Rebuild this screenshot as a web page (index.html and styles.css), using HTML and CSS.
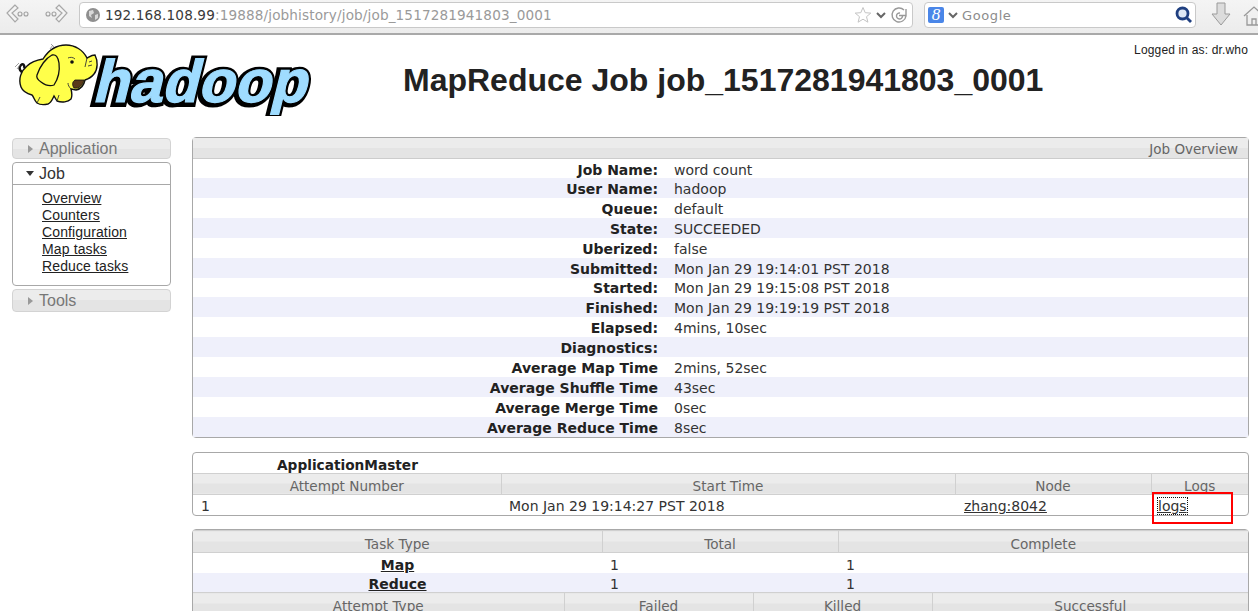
FILE: index.html
```html
<!DOCTYPE html>
<html lang="en">
<head>
<meta charset="utf-8">
<title>MapReduce Job job_1517281941803_0001</title>
<link rel="stylesheet" href="styles.css">
</head>
<body>
<div class="browser">
  <svg class="nav-ico" viewBox="0 0 26 24"><path class="chev" d="M11 3 L3 11 L11 20 L14 17 L8 11 L14 6 Z"/><circle class="dot" cx="16" cy="12" r="2"/><circle class="dot" cx="22" cy="12" r="2"/></svg>
  <svg class="nav-ico nav-fwd" viewBox="0 0 26 24"><path class="chev" d="M15 3 L23 11 L15 20 L12 17 L18 11 L12 6 Z"/><circle class="dot" cx="10" cy="12" r="2"/><circle class="dot" cx="4" cy="12" r="2"/></svg>
  <div class="urlbar">
    <svg class="globe" viewBox="0 0 14 14"><circle cx="7" cy="7" r="7" fill="#8f8f8f"/><path d="M3 3 L7 2 L8 5 L5 7 L6 10 L3 8 Z M9 7 L12 6 L12 10 L9 12 Z" fill="#d8d8d8"/></svg>
    <span class="url"><span class="host">192.168.108.99</span>:19888/jobhistory/job/job_1517281941803_0001</span>
    <svg class="star" viewBox="0 0 18 18"><path d="M9 1.5 L11.2 6.7 L16.8 7.1 L12.5 10.7 L13.9 16.2 L9 13.2 L4.1 16.2 L5.5 10.7 L1.2 7.1 L6.8 6.7 Z"/></svg>
    <svg class="caret" viewBox="0 0 10 7"><path d="M1 1 L5 5 L9 1"/></svg>
    <svg class="reload" viewBox="0 0 18 18"><path d="M14 4 A7 7 0 1 0 16 10 M10 7 A3 3 0 1 0 12.5 10 M9 9.5 H16 V3"/></svg>
  </div>
  <div class="searchbar">
    <span class="gicon">8</span>
    <svg class="caret" viewBox="0 0 10 7"><path d="M1 1 L5 5 L9 1"/></svg>
    <span class="engine">Google</span>
    <svg class="mag" viewBox="0 0 18 18"><circle cx="7.5" cy="7.5" r="5.5"/><path d="M11.5 11.5 L16 16"/></svg>
  </div>
  <svg class="download" viewBox="0 0 20 26"><path d="M6 1 H14 V12 H19 L10 23 L1 12 H6 Z"/></svg>
  <svg class="home" viewBox="0 0 20 22"><path d="M1 11 L11 2 L21 11 M4 10 V20 H18 V10 M9 20 V14 H13 V20"/></svg>
</div>

<header class="banner">
  <svg class="logo" viewBox="13 40 300 75" role="img" aria-label="Hadoop logo">
    <g transform="skewX(-14)">
      <text class="logo-back" x="116" y="102" textLength="214" lengthAdjust="spacingAndGlyphs">hadoop</text>
      <text class="logo-word" x="117" y="101" textLength="214" lengthAdjust="spacingAndGlyphs">hadoop</text>
    </g>
    <path class="ele-tail" d="M26 72 C20 72 18 67 21 64 C23 62 25 64 24 67"/>
    <path class="ele-hair" d="M15 66 L19 62 M17 68 L20 64 M50 48 L53 44 M54 46 L51 43"/>
    <path class="ele" d="M21 86 C18 78 21 70 27 65 C31 61 37 59 43 58 C48 50 56 44 66 44 C75 44 83 49 87 57 C89 56 92 54 95 54 C98 60 98 68 94 73 C91 77 88 78 85 79 C84 84 81 88 76 89 L71 88 C72 92 72 96 71 98 C68 101 62 102 57 100 L54 95 C52 99 51 102 48 103 C44 104 40 104 37 102 C34 99 34 96 32 94 C28 93 23 91 21 86 Z"/>
    <path class="ele-ear" d="M37 74 C40 65 46 57 52 54 C56 53 58 56 59 62 C60 70 58 78 54 84 C49 86 45 84 41 81 C38 79 36 77 37 74 Z"/>
    <path class="ele-mouth" d="M74 87 C72 84 72 81 75 79 L84 79 C83 84 79 88 74 87 Z"/>
    <circle class="ele-eye" cx="72" cy="61" r="1.8"/>
    <path class="ele-line" d="M68 57 C70 56 73 56 75 58 M87 57 L85 66 M89 61 L92 60 M88 65 L92 64 M71 88 C69 86 68 84 68 82 M37 102 L40 96 M57 100 L59 94"/>
  </svg>
  <h1 class="title">MapReduce Job job_1517281941803_0001</h1>
  <div class="logged">Logged in as: dr.who</div>
</header>

<div class="page">
  <nav class="sidebar">
    <div class="acc-head"><span class="tri tri-right"></span>Application</div>
    <div class="acc-open">
      <div class="acc-title"><span class="tri tri-down"></span>Job</div>
      <ul class="acc-links">
        <li><a href="#">Overview</a></li>
        <li><a href="#">Counters</a></li>
        <li><a href="#">Configuration</a></li>
        <li><a href="#">Map tasks</a></li>
        <li><a href="#">Reduce tasks</a></li>
      </ul>
    </div>
    <div class="acc-head"><span class="tri tri-right"></span>Tools</div>
  </nav>

  <main class="content">
    <div class="box">
      <table class="grid overview">
        <colgroup><col class="ov-label"><col></colgroup>
        <thead><tr><th colspan="2" class="ov-head">Job Overview</th></tr></thead>
        <tbody>
          <tr class="ov-first"><th>Job Name:</th><td>word count</td></tr>
          <tr class="alt"><th>User Name:</th><td>hadoop</td></tr>
          <tr><th>Queue:</th><td>default</td></tr>
          <tr class="alt"><th>State:</th><td>SUCCEEDED</td></tr>
          <tr><th>Uberized:</th><td>false</td></tr>
          <tr class="alt"><th>Submitted:</th><td>Mon Jan 29 19:14:01 PST 2018</td></tr>
          <tr><th>Started:</th><td>Mon Jan 29 19:15:08 PST 2018</td></tr>
          <tr class="alt"><th>Finished:</th><td>Mon Jan 29 19:19:19 PST 2018</td></tr>
          <tr><th>Elapsed:</th><td>4mins, 10sec</td></tr>
          <tr class="alt"><th>Diagnostics:</th><td></td></tr>
          <tr><th>Average Map Time</th><td>2mins, 52sec</td></tr>
          <tr class="alt"><th>Average Shuffle Time</th><td>43sec</td></tr>
          <tr><th>Average Merge Time</th><td>0sec</td></tr>
          <tr class="alt"><th>Average Reduce Time</th><td>8sec</td></tr>
        </tbody>
      </table>
    </div>

    <div class="box box-am">
      <div class="am-title">ApplicationMaster</div>
      <table class="grid attempts">
        <colgroup><col class="am-c1"><col class="am-c2"><col class="am-c3"><col></colgroup>
        <thead><tr class="head"><th>Attempt Number</th><th>Start Time</th><th>Node</th><th>Logs</th></tr></thead>
        <tbody>
          <tr><td>1</td><td>Mon Jan 29 19:14:27 PST 2018</td><td class="am-node"><a href="#">zhang:8042</a></td><td class="am-logs"><a class="focused" href="#">logs</a></td></tr>
        </tbody>
      </table>
      <div class="annot"></div>
    </div>

    <div class="box box-tasks">
      <table class="grid tasks">
        <colgroup><col class="t-c1"><col class="t-c2"><col class="t-c3"><col class="t-c4"><col class="t-c5"><col></colgroup>
        <tbody>
          <tr class="head"><th colspan="2">Task Type</th><th colspan="2">Total</th><th colspan="2">Complete</th></tr>
          <tr class="t-first"><td colspan="2" class="t-name"><a href="#">Map</a></td><td colspan="2">1</td><td colspan="2">1</td></tr>
          <tr class="alt"><td colspan="2" class="t-name"><a href="#">Reduce</a></td><td colspan="2">1</td><td colspan="2">1</td></tr>
          <tr class="head"><th>Attempt Type</th><th colspan="2">Failed</th><th colspan="2">Killed</th><th>Successful</th></tr>
        </tbody>
      </table>
    </div>
  </main>
</div>
</body>
</html>
```
FILE: styles.css
```css
* { box-sizing: border-box; }
html, body { margin: 0; height: 611px; overflow: hidden; background: #fff; }
body { font-family: "DejaVu Sans", sans-serif; color: #222; }
a { color: inherit; }

/* browser chrome */
.browser {
  height: 35px;
  display: flex;
  align-items: flex-start;
  padding: 2px 0 0 4px;
  background: linear-gradient(#f4f4f4, #ececec);
  border-bottom: 2px solid #a9a9a9;
  overflow: hidden;
}
.nav-ico { width: 26px; height: 24px; margin-right: 13px; flex: none; }
.nav-fwd { margin-right: 9px; margin-left: 1px; }
.chev { fill: #f4f4f4; stroke: #a8a8a8; stroke-width: 1.2; }
.dot { fill: none; stroke: #a0a0a0; stroke-width: 1.1; }
.urlbar, .searchbar {
  height: 26px;
  background: #fff;
  border: 1px solid #c9c9c9;
  border-radius: 4px;
  display: flex;
  align-items: center;
  flex: none;
}
.urlbar { width: 834px; padding: 0 4px 0 6px; }
.globe { width: 14px; height: 14px; flex: none; }
.url {
  margin-left: 5px;
  flex: 1;
  font-size: 13.6px;
  letter-spacing: 0.13px;
  color: #9a9a9a;
  white-space: nowrap;
}
.host { color: #3a3a3a; }
.star { width: 18px; height: 18px; fill: #fff; stroke: #c4c4c4; stroke-width: 1; flex: none; }
.caret { width: 10px; height: 7px; margin: 0 4px; fill: none; stroke: #666; stroke-width: 2; flex: none; }
.reload { width: 18px; height: 18px; fill: none; stroke: #999; stroke-width: 1.4; flex: none; }
.searchbar { width: 272px; margin-left: 11px; padding: 0 2px 0 3px; }
.gicon {
  width: 16px;
  height: 16px;
  background: #4a86e8;
  color: #fff;
  border-radius: 2px;
  font: italic 17px/16px "Liberation Serif", serif;
  text-align: center;
  flex: none;
}
.engine { flex: 1; font-size: 13px; letter-spacing: 0.6px; color: #8c8c8c; }
.mag { width: 18px; height: 18px; fill: #dfe8f5; stroke: #1f3f80; stroke-width: 2.8; flex: none; }
.download { width: 20px; height: 26px; margin-left: 15px; fill: #dcdcdc; stroke: #9a9a9a; flex: none; }
.home { width: 20px; height: 22px; margin: 3px 0 0 12px; fill: none; stroke: #999; stroke-width: 1.3; flex: none; }

/* banner */
.banner {
  height: 102px;
  display: flex;
  align-items: flex-start;
  padding: 5px 10px 0 13px;
}
.logo { width: 300px; height: 75px; flex: none; margin-top: 1px; }
.logo-back, .logo-word { font: bold 60px "Liberation Sans", Arial, sans-serif; stroke-linejoin: miter; }
.logo-back { fill: #000; stroke: #000; stroke-width: 8px; }
.logo-word { fill: #9fdcff; stroke: #9fdcff; stroke-width: 1.2px; }
.ele { fill: #ffff4a; stroke: #111; stroke-width: 1.4; }
.ele-ear { fill: #ffff4a; stroke: #111; stroke-width: 1.3; }
.ele-mouth { fill: #5a3a1a; stroke: #111; stroke-width: 0.8; }
.ele-eye { fill: #111; }
.ele-line { fill: none; stroke: #333; stroke-width: 0.9; }
.ele-tail { fill: none; stroke: #111; stroke-width: 2.4; }
.ele-hair { fill: none; stroke: #888; stroke-width: 0.8; }
.title {
  margin: 20px 0 0 90px;
  font: bold 32px/40px "Liberation Sans", Arial, sans-serif;
  color: #222;
  white-space: nowrap;
}
.logged {
  margin-left: auto;
  margin-top: 3px;
  font: 12px/14px "Liberation Sans", Arial, sans-serif;
  letter-spacing: 0.16px;
  color: #222;
  white-space: nowrap;
}

/* layout */
.page { display: flex; align-items: flex-start; padding-left: 12px; gap: 21px; }

/* sidebar */
.sidebar { width: 159px; flex: none; display: flex; flex-direction: column; gap: 3px; padding-top: 1px; font-family: "Liberation Sans", Arial, sans-serif; }
.acc-head, .acc-title {
  height: 21px;
  font-size: 16px;
  line-height: 20px;
  padding-left: 15px;
  display: flex;
  align-items: center;
}
.acc-head {
  border: 1px solid #d3d3d3;
  border-radius: 4px;
  background: linear-gradient(#ececec 50%, #e4e4e4 50%);
  color: #777;
}
.acc-head:last-child { height: 23px; }
.acc-open { border: 1px solid #a8a8a8; border-radius: 4px; height: 124px; background: #fff; }
.acc-title { border-bottom: 1px solid #a8a8a8; color: #333; height: 22px; }
.tri { width: 0; height: 0; margin-right: 6px; flex: none; }
.tri-right { border-left: 5px solid #999; border-top: 4px solid transparent; border-bottom: 4px solid transparent; }
.tri-down { border-top: 5px solid #333; border-left: 4px solid transparent; border-right: 4px solid transparent; margin-left: -2px; margin-right: 5px; }
.acc-links { list-style: none; margin: 0; padding: 5px 0 0 29px; font-size: 14px; letter-spacing: 0.13px; line-height: 17px; color: #222; }

/* tables */
.content { width: 1057px; flex: none; display: flex; flex-direction: column; }
.box { border: 1px solid #a8a8a8; border-radius: 4px; background: #fff; position: relative; }
.grid { width: 100%; border-collapse: collapse; table-layout: fixed; font-size: 14px; }
.grid th, .grid td { padding: 0 8px; overflow: visible; white-space: nowrap; }
.grid td { font-weight: normal; color: #333; padding-top: 2px; }
.alt { background: #eff0fb; }

.overview tbody tr { height: 19.93px; }
.overview tbody th { padding-top: 2px; text-align: right; font-weight: bold; color: #222; }
.overview .ov-first th, .overview .ov-first td { padding-top: 3px; }
.ov-label { width: 473px; }
.ov-head {
  height: 20px;
  text-align: right;
  font-weight: normal;
  font-size: 13.5px;
  color: #666;
  background: linear-gradient(#ececec 50%, #e4e4e4 50%);
  border-bottom: 1px solid #ccc;
  padding: 2px 10px 0 0 !important;
}
.head th {
  font-weight: normal;
  font-size: 13.6px;
  color: #666;
  text-align: center;
  background: linear-gradient(#ececec 50%, #e4e4e4 50%);
  border: 1px solid #d0d0d0;
}
.head th:first-child { border-left: 0; }
.head th:last-child { border-right: 0; }

.box-am { margin-top: 14px; }
.am-title { height: 20px; padding-left: 84px; font-size: 13.7px; font-weight: bold; line-height: 24px; color: #222; }
.attempts .head th { height: 21px; padding-top: 4px; line-height: 16px; }
.attempts tbody tr { height: 21px; }
.am-c1 { width: 308px; }
.am-c2 { width: 454px; }
.am-c3 { width: 196px; }
.am-node { padding-left: 9px !important; }
.am-logs { padding-left: 7px !important; }
.focused { outline: 1px dotted #111; outline-offset: 0; }
.annot {
  position: absolute;
  left: 959px;
  top: 39px;
  width: 81px;
  height: 32px;
  border: 2.5px solid #f00;
}

.box-tasks { margin-top: 13px; }
.tasks tr { height: 20px; }
.tasks .head th { height: 22px; padding-top: 4px; line-height: 16px; }
.tasks .t-first td { padding-top: 3px; }
.t-c1 { width: 371px; }
.t-c2 { width: 38px; }
.t-c3 { width: 151px; }
.t-c4 { width: 85px; }
.t-c5 { width: 94px; }
.t-name { text-align: center; font-weight: bold !important; color: #222 !important; }
```
